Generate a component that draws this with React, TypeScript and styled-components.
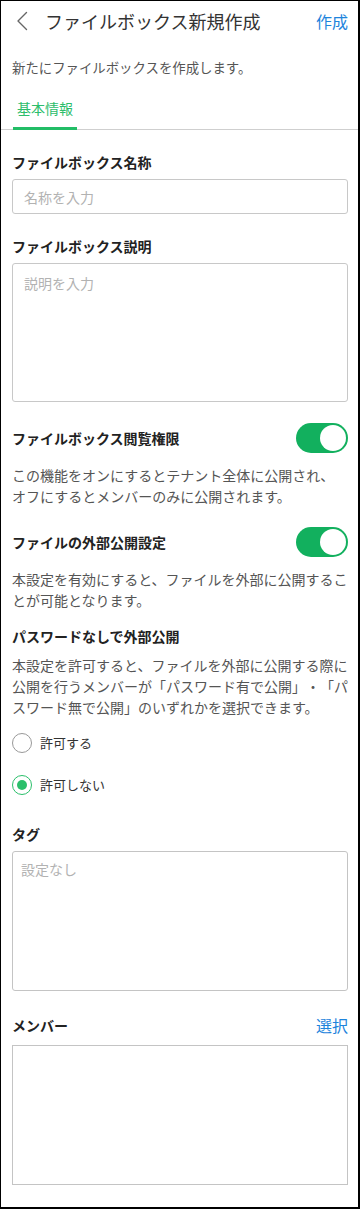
import styled, { createGlobalStyle } from "styled-components";

const GlobalStyle = createGlobalStyle`
  html, body {
    margin: 0;
    padding: 0;
    background: #fff;
  }
  body {
    font-family: "Noto Sans CJK JP", "Noto Sans", sans-serif;
    color: #222;
    text-spacing-trim: space-all;
  }
  * {
    box-sizing: border-box;
  }
`;

const Page = styled.div`
  width: 360px;
  min-height: 1209px;
  border: 1px solid #000;
  border-right-width: 2px;
  border-bottom-width: 2px;
  display: flex;
  flex-direction: column;
  background: #fff;
`;

const Header = styled.header`
  height: 40px;
  display: flex;
  align-items: center;
  padding: 0 10px 0 15px;
`;

const BackButton = styled.button`
  width: 14px;
  height: 20px;
  padding: 0;
  border: none;
  background: none;
  display: flex;
  align-items: center;
  color: #666;
`;

const Title = styled.h1`
  flex: 1;
  margin: 0 0 0 15px;
  font-size: 18px;
  line-height: 24px;
  font-weight: 400;
  color: #333;
`;

const LinkButton = styled.button<{ $size?: number }>`
  padding: 0;
  border: none;
  background: none;
  font-family: inherit;
  font-size: ${({ $size }) => $size ?? 16}px;
  line-height: 22px;
  color: #1e84dc;
  cursor: pointer;
`;

const Lead = styled.p`
  margin: 16px 0 0;
  padding-left: 11px;
  font-size: 13.4px;
  line-height: 20px;
  color: #555;
`;

const TabBar = styled.nav`
  display: flex;
  padding-left: 12px;
  border-bottom: 1px solid #cfcfcf;
`;

const Tab = styled.div<{ $active?: boolean }>`
  padding: 21px 4px 9px;
  margin-bottom: -1px;
  font-size: 14px;
  line-height: 20px;
  color: ${({ $active }) => ($active ? "#2dbd6b" : "#666")};
  border-bottom: 3px solid ${({ $active }) => ($active ? "#22bd66" : "transparent")};
`;

const Form = styled.form`
  display: flex;
  flex-direction: column;
  padding: 0 10px 0 11px;
`;

const FieldLabel = styled.label<{ $top: number }>`
  display: block;
  margin-top: ${({ $top }) => $top}px;
  font-size: 14px;
  line-height: 20px;
  font-weight: 700;
  color: #222;
`;

const TextInput = styled.input`
  margin-top: 7px;
  width: 100%;
  height: 35px;
  padding: 0 11px;
  border: 1px solid #c8c8c8;
  border-radius: 3px;
  font-family: inherit;
  font-size: 14px;
  color: #222;
  outline: none;

  &::placeholder {
    color: #b2b2b2;
  }
`;

const TextArea = styled.textarea`
  margin-top: 7px;
  width: 100%;
  height: 139px;
  padding: 9px 11px;
  border: 1px solid #c8c8c8;
  border-radius: 3px;
  font-family: inherit;
  font-size: 14px;
  line-height: 20px;
  color: #222;
  resize: none;
  outline: none;

  &::placeholder {
    color: #b2b2b2;
  }
`;

const SettingRow = styled.div<{ $top: number }>`
  margin-top: ${({ $top }) => $top}px;
  min-height: 30px;
  display: flex;
  align-items: center;
  justify-content: space-between;
`;

const RowTitle = styled.span`
  font-size: 14px;
  line-height: 20px;
  font-weight: 700;
  color: #222;
`;

const Toggle = styled.button<{ $on: boolean }>`
  position: relative;
  width: 52px;
  height: 30px;
  padding: 0;
  border: none;
  border-radius: 15px;
  background: ${({ $on }) => ($on ? "#12b05e" : "#ccc")};
  cursor: pointer;

  &::after {
    content: "";
    position: absolute;
    top: 2px;
    left: ${({ $on }) => ($on ? "24px" : "2px")};
    width: 26px;
    height: 26px;
    border-radius: 50%;
    background: #fff;
  }
`;

const Description = styled.p<{ $top: number }>`
  margin: ${({ $top }) => $top}px 0 0;
  width: 337px;
  font-size: 14px;
  line-height: 21px;
  color: #555;
`;

const RadioGroup = styled.div`
  margin-top: 14px;
  display: flex;
  flex-direction: column;
  gap: 21px;
`;

const RadioOption = styled.label`
  height: 21px;
  display: flex;
  align-items: center;
  gap: 8px;
  font-size: 13px;
  color: #333;
  cursor: pointer;
`;

const RadioMark = styled.span<{ $checked: boolean }>`
  width: 20px;
  height: 20px;
  border-radius: 50%;
  border: ${({ $checked }) => ($checked ? "1.5px solid #2bbf6b" : "1px solid #999")};
  display: flex;
  align-items: center;
  justify-content: center;

  &::after {
    content: "";
    width: 10px;
    height: 10px;
    border-radius: 50%;
    background: ${({ $checked }) => ($checked ? "#2bbf6b" : "transparent")};
  }
`;

const Box = styled.div<{ $rounded?: boolean; $top: number }>`
  margin-top: ${({ $top }) => $top}px;
  height: 140px;
  padding: 7px 8px;
  border: 1px solid #c4c4c4;
  border-radius: ${({ $rounded }) => ($rounded ? "3px" : "0")};
  font-size: 14px;
  line-height: 20px;
  color: #b2b2b2;
`;

const SectionHeader = styled.div`
  margin-top: 23px;
  height: 22px;
  display: flex;
  align-items: center;
  justify-content: space-between;
`;

const ChevronLeft = () => (
  <svg width="12" height="20" viewBox="0 0 12 20" fill="none">
    <path d="M10.5 1.5 L2 10 L10.5 18.5" stroke="currentColor" strokeWidth="1.4" strokeLinecap="round" strokeLinejoin="round" />
  </svg>
);

export default function App() {
  return (
    <>
      <GlobalStyle />
      <Page>
        <Header>
          <BackButton aria-label="戻る">
            <ChevronLeft />
          </BackButton>
          <Title>ファイルボックス新規作成</Title>
          <LinkButton>作成</LinkButton>
        </Header>

        <Lead>新たにファイルボックスを作成します。</Lead>

        <TabBar>
          <Tab $active>基本情報</Tab>
        </TabBar>

        <Form onSubmit={(e) => e.preventDefault()}>
          <FieldLabel $top={22} htmlFor="name">ファイルボックス名称</FieldLabel>
          <TextInput id="name" placeholder="名称を入力" />

          <FieldLabel $top={22} htmlFor="desc">ファイルボックス説明</FieldLabel>
          <TextArea id="desc" placeholder="説明を入力" />

          <SettingRow $top={21}>
            <RowTitle>ファイルボックス閲覧権限</RowTitle>
            <Toggle type="button" $on aria-label="閲覧権限" />
          </SettingRow>
          <Description $top={12}>
            この機能をオンにするとテナント全体に公開され、
            <br />
            オフにするとメンバーのみに公開されます。
          </Description>

          <SettingRow $top={20}>
            <RowTitle>ファイルの外部公開設定</RowTitle>
            <Toggle type="button" $on aria-label="外部公開設定" />
          </SettingRow>
          <Description $top={12}>
            本設定を有効にすると、ファイルを外部に公開することが可能となります。
          </Description>

          <FieldLabel $top={15}>パスワードなしで外部公開</FieldLabel>
          <Description $top={9}>
            本設定を許可すると、ファイルを外部に公開する際に公開を行うメンバーが「パスワード有で公開」・「パスワード無で公開」のいずれかを選択できます。
          </Description>

          <RadioGroup>
            <RadioOption>
              <RadioMark $checked={false} />
              許可する
            </RadioOption>
            <RadioOption>
              <RadioMark $checked />
              許可しない
            </RadioOption>
          </RadioGroup>

          <FieldLabel $top={29}>タグ</FieldLabel>
          <Box $rounded $top={7}>設定なし</Box>

          <SectionHeader>
            <RowTitle>メンバー</RowTitle>
            <LinkButton>選択</LinkButton>
          </SectionHeader>
          <Box $top={9} />
        </Form>
      </Page>
    </>
  );
}
